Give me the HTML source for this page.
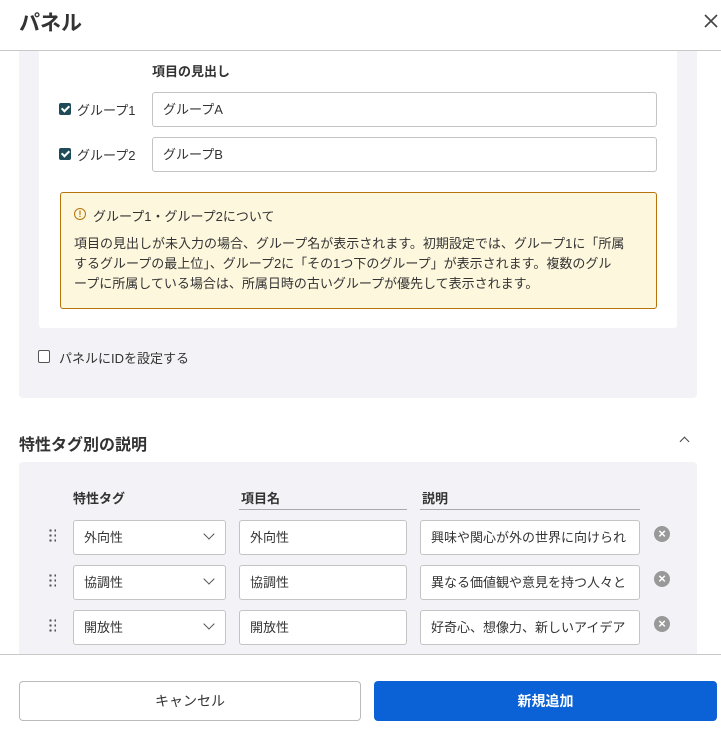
<!DOCTYPE html>
<html><head><meta charset="utf-8"><style>
*{box-sizing:border-box;margin:0;padding:0}
body{width:721px;height:730px;overflow:hidden;background:#fff;font-family:"Liberation Sans","Noto Sans CJK JP",sans-serif;color:#333;position:relative;font-size:13px}
.a{position:absolute}
.inp{position:absolute;height:35px;border:1px solid #c4c4c4;border-radius:3px;background:#fff;padding:0 10px;line-height:33px;font-size:13px;color:#333;white-space:nowrap;overflow:hidden}
.cb{position:absolute;width:12px;height:12px;background:#1e4a5a;border-radius:2px}
.cb:after{content:"";position:absolute;left:4px;top:1px;width:3px;height:6px;border:solid #fff;border-width:0 2px 2px 0;transform:rotate(45deg)}
.dots{position:absolute;width:8px;height:16px;background-image:radial-gradient(circle,#555 1.1px,transparent 1.3px);background-size:5px 5px}
.x{position:absolute;width:16px;height:16px;border-radius:50%;background:#999;color:#fff;font-size:13px;line-height:16px;text-align:center;font-weight:bold}
</style></head><body>
<div class="a" style="left:19px;top:7px;font-size:21px;font-weight:bold;color:#333">パネル</div>
<svg class="a" style="left:704px;top:14px" width="14" height="14"><path d="M1 1L13 13M13 1L1 13" stroke="#444" stroke-width="1.6"/></svg>
<div class="a" style="left:0;top:50px;width:721px;height:1px;background:#c8c8c8"></div>

<div class="a" style="left:19px;top:51px;width:678px;height:347px;background:#f3f3f7;border-radius:0 0 4px 4px"></div>
<div class="a" style="left:39px;top:51px;width:638px;height:277px;background:#fff;border-radius:0 0 3px 3px"></div>
<div class="a" style="left:152px;top:61px;font-weight:bold;font-size:13px">項目の見出し</div>
<div class="cb" style="left:59px;top:103px"></div>
<div class="a" style="left:77px;top:100px;font-size:13px">グループ1</div>
<div class="inp" style="left:152px;top:92px;width:505px;padding-left:10px">グループA</div>
<div class="cb" style="left:59px;top:148px"></div>
<div class="a" style="left:77px;top:145px;font-size:13px">グループ2</div>
<div class="inp" style="left:152px;top:137px;width:505px">グループB</div>

<div class="a" style="left:60px;top:192px;width:597px;height:117px;background:#fdf7de;border:1px solid #b8740c;border-radius:3px"></div>
<div class="a" style="left:74px;top:208px;width:12px;height:12px;border:1.3px solid #b8740c;border-radius:50%;color:#b8740c;font-size:9px;line-height:10px;text-align:center;font-weight:bold">!</div>
<div class="a" style="left:93px;top:206px;font-size:13px">グループ1・グループ2について</div>
<div class="a" style="left:74px;top:234px;width:600px;font-size:13px;line-height:20px;white-space:nowrap">項目の見出しが未入力の場合、グループ名が表示されます。初期設定では、グループ1に「所属<br>するグループの最上位」、グループ2に「その1つ下のグループ」が表示されます。複数のグル<br>ープに所属している場合は、所属日時の古いグループが優先して表示されます。</div>

<div class="a" style="left:38px;top:350px;width:12px;height:13px;border:1px solid #555;border-radius:2px;background:#fff"></div>
<div class="a" style="left:59px;top:348px;font-size:13px">パネルにIDを設定する</div>

<div class="a" style="left:19px;top:431px;font-size:16px;font-weight:bold">特性タグ別の説明</div>
<div class="a" style="left:681px;top:438px;width:7px;height:7px;border-left:1.5px solid #444;border-top:1.5px solid #444;transform:rotate(45deg)"></div>

<div class="a" style="left:19px;top:462px;width:678px;height:200px;background:#f3f3f7;border-radius:4px 4px 0 0"></div>
<div class="a" style="left:73px;top:488px;font-weight:bold">特性タグ</div>
<div class="a" style="left:241px;top:488px;font-weight:bold">項目名</div>
<div class="a" style="left:422px;top:488px;font-weight:bold">説明</div>
<div class="a" style="left:239px;top:509px;width:168px;height:1px;background:#aaa"></div>
<div class="a" style="left:420px;top:509px;width:220px;height:1px;background:#aaa"></div>

<div class="dots" style="left:48px;top:528px"></div>
<div class="inp" style="left:73px;top:520px;width:153px">外向性</div>
<div class="a" style="left:205px;top:530px;width:8px;height:8px;border-right:1.5px solid #555;border-bottom:1.5px solid #555;transform:rotate(45deg)"></div>
<div class="inp" style="left:239px;top:520px;width:168px">外向性</div>
<div class="inp" style="left:420px;top:520px;width:220px">興味や関心が外の世界に向けられ</div>
<div class="x" style="left:654px;top:526px">×</div>

<div class="dots" style="left:48px;top:573px"></div>
<div class="inp" style="left:73px;top:565px;width:153px">協調性</div>
<div class="a" style="left:205px;top:575px;width:8px;height:8px;border-right:1.5px solid #555;border-bottom:1.5px solid #555;transform:rotate(45deg)"></div>
<div class="inp" style="left:239px;top:565px;width:168px">協調性</div>
<div class="inp" style="left:420px;top:565px;width:220px">異なる価値観や意見を持つ人々と</div>
<div class="x" style="left:654px;top:571px">×</div>

<div class="dots" style="left:48px;top:618px"></div>
<div class="inp" style="left:73px;top:610px;width:153px">開放性</div>
<div class="a" style="left:205px;top:620px;width:8px;height:8px;border-right:1.5px solid #555;border-bottom:1.5px solid #555;transform:rotate(45deg)"></div>
<div class="inp" style="left:239px;top:610px;width:168px">開放性</div>
<div class="inp" style="left:420px;top:610px;width:220px">好奇心、想像力、新しいアイデア</div>
<div class="x" style="left:654px;top:616px">×</div>

<div class="a" style="left:0;top:654px;width:721px;height:76px;background:#fff;border-top:1px solid #c8c8c8"></div>
<div class="a" style="left:19px;top:681px;width:342px;height:40px;border:1px solid #bbb;border-radius:4px;text-align:center;line-height:38px;font-size:14px;color:#333">キャンセル</div>
<div class="a" style="left:374px;top:681px;width:343px;height:40px;background:#0a62d6;border-radius:4px;text-align:center;line-height:40px;font-size:14px;color:#fff;font-weight:bold">新規追加</div>
</body></html>
